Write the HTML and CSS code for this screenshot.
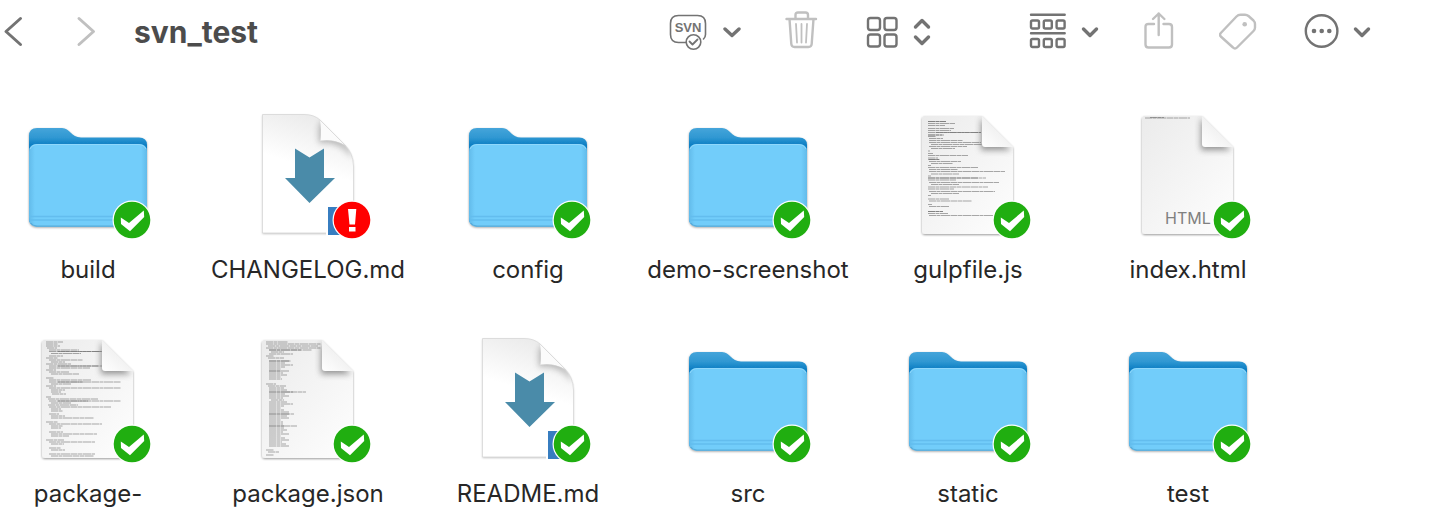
FILE: index.html
```
<!DOCTYPE html>
<html lang="en">
<head>
    <meta charset="utf-8">
    <meta name="viewport" content="width=device-width, initial-scale=1">
    <title>svn_test</title>
    <link rel="stylesheet" href="styles.css">
</head>
<body>
    <!-- shared icons -->
    <svg class="defs" width="0" height="0" aria-hidden="true">
        <defs>
            <linearGradient id="folderBack" x1="0" y1="0" x2="0" y2="1">
                <stop offset="0" stop-color="#45a5da"/>
                <stop offset="0.1" stop-color="#2f97d2"/>
                <stop offset="0.17" stop-color="#0f7fc4"/>
                <stop offset="1" stop-color="#0f7fc4"/>
            </linearGradient>
            <linearGradient id="folderSide" x1="0" y1="0" x2="1" y2="0">
                <stop offset="0" stop-color="#62bbea"/>
                <stop offset="0.05" stop-color="#72cdfa"/>
                <stop offset="0.95" stop-color="#72cdfa"/>
                <stop offset="1" stop-color="#62bbea"/>
            </linearGradient>
            <linearGradient id="paper" x1="0" y1="0" x2="1" y2="1">
                <stop offset="0" stop-color="#ebebeb"/>
                <stop offset="1" stop-color="#fefefe"/>
            </linearGradient>
            <linearGradient id="flap" x1="0" y1="1" x2="0.6" y2="0.3">
                <stop offset="0" stop-color="#ffffff"/>
                <stop offset="1" stop-color="#eeeeee"/>
            </linearGradient>
            <linearGradient id="mdPaper" x1="0.4" y1="0" x2="0.3" y2="0.4">
                <stop offset="0" stop-color="#ececec"/>
                <stop offset="1" stop-color="#ffffff"/>
            </linearGradient>
            <filter id="shadow" x="-10%" y="-10%" width="120%" height="120%">
                <feDropShadow dx="0" dy="1" stdDeviation="1" flood-color="#000" flood-opacity="0.4"/>
            </filter>
            <filter id="soft" x="-50%" y="-50%" width="200%" height="200%">
                <feGaussianBlur stdDeviation="3"/>
            </filter>
            <clipPath id="mdClip">
                <path d="M18.500 2.500H60Q70 2.500 76 8L101 33Q109 41 109.500 54V121H18.500Z"/>
            </clipPath>
            <clipPath id="docClip">
                <path d="M21 4H78L109 35V119Q109 122 106 122H21Q18 122 18 119V7Q18 4 21 4Z"/>
            </clipPath>
        </defs>

        <symbol id="folder" viewBox="0 0 128 128">
            <g filter="url(#shadow)">
                <path d="M5 24Q5 16 13 16H38C46 16 47 25.500 57 25.500H115Q123 25.500 123 33V106Q123 114.500 115 114.500H13Q5 114.500 5 106Z" fill="url(#folderBack)"/>
            </g>
            <path d="M5 40Q5 32 13 32H115Q123 32 123 40V106Q123 114.500 115 114.500H13Q5 114.500 5 106Z" fill="url(#folderSide)"/>
            <path d="M6 37Q8 32.500 14 32.500H114Q120 32.500 122 37" fill="none" stroke="#8fd8fc"/>
            <path d="M5.500 104.500H122.500M5.500 108H122.500" stroke="#63bdee" stroke-width="1.300"/>
            <path d="M7 111Q9 114 13 114H115Q119 114 121 111" fill="none" stroke="#58acd9"/>
        </symbol>

        <symbol id="markdown" viewBox="0 0 128 128">
            <g filter="url(#shadow)" opacity="0.6">
                <path d="M18.500 2.500H60Q70 2.500 76 8L101 33Q109 41 109.500 54V121H18.500Z" fill="#fff"/>
            </g>
            <g clip-path="url(#mdClip)">
                <path d="M18 2H111V122H18Z" fill="url(#mdPaper)"/>
                <path d="M75 14V31Q96 28 108 46L106 36L80 8Z" fill="#666" opacity="0.450" filter="url(#soft)"/>
            </g>
            <path d="M76 8Q77.500 16 76.500 29Q90 27 102 34Z" fill="#fbfbfb"/>
            <path d="M76.500 29Q90 27 102 34" fill="none" stroke="#cccccc" stroke-width="0.700"/>
            <path d="M18.500 121V2.500H60Q70 2.500 76 8L101 33Q109 41 109.500 54V121Z" fill="none" stroke="#d9d9d9" stroke-width="0.900"/>
            <path d="M51 36.500L65.500 45.500L80 36.500V66H91L65.500 91L41 66H51Z" fill="#4a8ba9"/>
            <path d="M82 93H96V124H82Z" fill="#fff"/>
            <path d="M84 95H96V123H84Z" fill="#377dc0"/>
        </symbol>

        <symbol id="document" viewBox="0 0 128 128">
            <g filter="url(#shadow)">
                <path d="M21 4H78L109 35V119Q109 122 106 122H21Q18 122 18 119V7Q18 4 21 4Z" fill="url(#paper)"/>
            </g>
        </symbol>

        <symbol id="fold" viewBox="0 0 128 128">
            <g clip-path="url(#docClip)">
                <path d="M77 6V38H107Z" fill="#666" opacity="0.700" filter="url(#soft)"/>
            </g>
            <path d="M78 4V32Q78 35 81 35H109Z" fill="url(#flap)"/>
        </symbol>

        <symbol id="ok" viewBox="0 0 128 128">
            <circle cx="108" cy="108" r="19.500" fill="#fff"/>
            <circle cx="108" cy="108" r="18.300" fill="#20ae10"/>
            <path d="M96.800 105.500L105 111L119.800 98.500L120.200 105L106 119.200L97 112Z" fill="#fff"/>
        </symbol>

        <symbol id="conflict" viewBox="0 0 128 128">
            <circle cx="108" cy="108" r="19.500" fill="#fff"/>
            <circle cx="108" cy="108" r="18.300" fill="#f00"/>
            <path d="M104 97H112.300L111 112.500H105.500ZM105 115H111.500V119.500H105Z" fill="#fff"/>
        </symbol>
    </svg>

    <header class="toolbar">
        <nav class="history">
            <button class="tool" aria-label="Back">
                <svg width="24" height="44"><path class="nav" d="M20.500 8.500L6 21.500L20.500 34.500"/></svg>
            </button>
            <button class="tool faded" aria-label="Forward">
                <svg width="24" height="44"><path class="nav" d="M7 8.500L21.500 21.500L7 34.500"/></svg>
            </button>
        </nav>
        <h1 class="title">svn_test</h1>

        <div class="tools">
            <button class="tool" aria-label="SVN">
                <svg width="72" height="44">
                    <path d="M17 32.500H9.500Q1.500 32.500 1.500 24.500V13.500Q1.500 5.500 9.500 5.500H28.500Q36.500 5.500 36.500 13.500V24.500Q36.500 27 34.500 29" stroke-width="1.600"/>
                    <text class="svn-text" x="19" y="22" text-anchor="middle">SVN</text>
                    <circle cx="24.500" cy="32" r="7.300" stroke-width="1.600"/>
                    <path d="M20.500 31.500L23.500 34.500L28.500 29.500" stroke-width="1.800"/>
                    <path class="chevron" d="M56 19L63 25.500L70 19"/>
                </svg>
            </button>
            <button class="tool faded" aria-label="Delete">
                <svg width="36" height="44">
                    <path d="M1.500 9H31M10.500 9V5Q10.500 2.500 13 2.500H20.500Q23 2.500 23 5V9M4.500 9L6.300 34Q6.600 37 9.500 37H23.500Q26.400 37 26.700 34L28.500 9"/>
                    <path d="M11 14L12 32.500M16.500 14V32.500M22 14L21 32.500" stroke-width="1.800"/>
                </svg>
            </button>
            <button class="tool" aria-label="Icon view">
                <svg width="68" height="44">
                    <rect x="3" y="8" width="12" height="12" rx="2.500"/>
                    <rect x="19.500" y="8" width="12" height="12" rx="2.500"/>
                    <rect x="3" y="24.500" width="12" height="12" rx="2.500"/>
                    <rect x="19.500" y="24.500" width="12" height="12" rx="2.500"/>
                    <path class="chevron" d="M50.500 17L57 10.500L63.500 17M50.500 27L57 33.500L63.500 27"/>
                </svg>
            </button>
            <button class="tool group" aria-label="Group by">
                <svg width="70" height="44">
                    <path d="M2 4.700H35.700M2 23.300H35.700"/>
                    <rect x="2" y="10.500" width="8" height="8" rx="1.500"/>
                    <rect x="14.800" y="10.500" width="8" height="8" rx="1.500"/>
                    <rect x="27.600" y="10.500" width="8" height="8" rx="1.500"/>
                    <rect x="2" y="29" width="8" height="8" rx="1.500"/>
                    <rect x="14.800" y="29" width="8" height="8" rx="1.500"/>
                    <rect x="27.600" y="29" width="8" height="8" rx="1.500"/>
                    <path class="chevron" d="M54.500 19L61 25.500L67.500 19"/>
                </svg>
            </button>
            <button class="tool faded" aria-label="Share">
                <svg width="32" height="44">
                    <path d="M11 14H5.500Q2.500 14 2.500 17V34.500Q2.500 37.500 5.500 37.500H26Q29 37.500 29 34.500V17Q29 14 26 14H20.500M15.700 25V3.500M10 9L15.700 3.500L21.400 9"/>
                </svg>
            </button>
            <button class="tool faded" aria-label="Tags">
                <svg width="40" height="44">
                    <path d="M1.800 23L17.500 6.500Q19.200 4.700 21.500 4.700H26Q28 4.700 29.500 6L34.500 10.500Q36 12 36 14V17.500Q36 19.500 34.500 21L18 37.500Q16 39.500 14 37.500L1.800 26.500Q0.200 24.800 1.800 23Z"/>
                    <circle class="dot" cx="25.700" cy="14.300" r="2.300"/>
                </svg>
            </button>
            <button class="tool" aria-label="More">
                <svg width="68" height="44">
                    <circle cx="18.600" cy="21" r="15.800"/>
                    <circle class="dot" cx="11" cy="21" r="2.300"/>
                    <circle class="dot" cx="18.700" cy="21" r="2.300"/>
                    <circle class="dot" cx="26.300" cy="21" r="2.300"/>
                    <path class="chevron" d="M52.500 19L59 25.500L65.500 19"/>
                </svg>
            </button>
        </div>
    </header>

    <main class="files">
        <a class="file" href="#build">
            <svg class="icon" viewBox="0 0 128 128"><use href="#folder"/><use href="#ok"/></svg>
            <span class="name">build</span>
        </a>
        <a class="file" href="#changelog">
            <svg class="icon" viewBox="0 0 128 128"><use href="#markdown"/><use href="#conflict"/></svg>
            <span class="name">CHANGELOG.md</span>
        </a>
        <a class="file" href="#config">
            <svg class="icon" viewBox="0 0 128 128"><use href="#folder"/><use href="#ok"/></svg>
            <span class="name">config</span>
        </a>
        <a class="file" href="#demo-screenshot">
            <svg class="icon" viewBox="0 0 128 128"><use href="#folder"/><use href="#ok"/></svg>
            <span class="name">demo-screenshot</span>
        </a>
        <a class="file" href="#gulpfile">
            <svg class="icon" viewBox="0 0 128 128">
                <use href="#document"/>
                <path class="code" d="M24 9.500h18M24 11.500h27M24 13.500h17M24 16.500h26M24 18.500h23M24 20.500h53M24 23h16M24 24.500h8M25 26.500h14M25 28.500h34M25 30.500h52M27 32.500h54M25 34.500h38M27 36.500h24M24 39h2M24 41.500h5M24 43.500h40M24 46h10M24 47.500h12M25 49.500h32M27 51.500h22M24 53.500h3M24 55.500h50M25 57.500h29M25 59.500h76M27 62h28M24 64h3M24 66h58M24 68h28M25 70.500h70M27 72.500h28M24 75h60M24 77h26M25 79.500h66M27 81.500h28M24 83.500h3M24 87h21M25 89h43M24 92.500h4M25 94.500h20M24 99.500h15M24 101.500h20M25 103.500h70"/>
                <path class="code" d="M24 9.500h18M32 20.500h45M24 23h14M25 47.500h10M24 66h50M24 99.500h15"/>
                <use href="#fold"/><use href="#ok"/>
            </svg>
            <span class="name">gulpfile.js</span>
        </a>
        <a class="file" href="#index">
            <svg class="icon" viewBox="0 0 128 128">
                <use href="#document"/>
                <path class="code" d="M21 6h45M26 5.500h14"/>
                <text class="kind" x="41" y="112">HTML</text>
                <use href="#fold"/><use href="#ok"/>
            </svg>
            <span class="name">index.html</span>
        </a>
        <a class="file" href="#package-lock">
            <svg class="icon" viewBox="0 0 128 128">
                <use href="#document"/>
                <path class="code" d="M22 6h17M22 8h12M22 10h14M23 12h10M25 14h30M25 15.500h53M27 17.500h30M25 20h14M22 22h12M25 24h34M27 26h14M22 28h25M25 30h53M25 32h41M22 34h10M25 36h20M27 38h28M22 42h8M25 44h42M25 46h72M27 48h20M22 50h10M25 52h72M27 54h14M27 56h10M28 58h14M22 61h5M24 63h50M25 65h72M27 67h20M24 69h30M25 71h62M27 73h10M27 75h12M25 78h10M27 80h14M27 82h43M22 86h12M25 88h53M27 90h12M27 92h10M25 96h14M27 98h46M27 100h18M22 104h18M25 106h46M27 108h13M25 112h12M27 114h14M25 118h46M27 120h43"/>
                <path class="code" d="M34 15.500h43M34 30h40M34 46h25M34 65h30"/>
                <use href="#fold"/><use href="#ok"/>
            </svg>
            <span class="name">package-</span>
        </a>
        <a class="file" href="#package">
            <svg class="icon" viewBox="0 0 128 128">
                <use href="#document"/>
                <path class="code" d="M22 6h22M22 8h55M24 10h50M22 12h55M25 14h43M27 16h13M25 18h24M22 20h8M24 22h16M25 25h22M25 27h16M25 29h24M25 31h16M25 33h12M25 35h20M25 37h14M25 39h18M25 41h12M25 43h13M22 48h10M24 50h18M25 52h15M25 54h18M25 56h37M25 58h16M25 60h20M25 62h14M27 64h13M25 66h18M25 68h24M25 70h15M25 72h12M25 74h15M25 76h20M25 78h25M25 80h18M25 82h20M25 84h12M25 86h14M25 88h14M25 90h28M25 92h15M25 94h18M25 96h14M25 98h20M25 100h12M25 102h16M25 104h20M25 106h13M25 108h17M25 110h20M22 114h8M24 116h11M22 119h8"/>
                <path class="code" d="M25 14h32M25 25h20M25 35h12M25 56h24M25 78h20M25 90h15"/>
                <use href="#fold"/><use href="#ok"/>
            </svg>
            <span class="name">package.json</span>
        </a>
        <a class="file" href="#readme">
            <svg class="icon" viewBox="0 0 128 128"><use href="#markdown"/><use href="#ok"/></svg>
            <span class="name">README.md</span>
        </a>
        <a class="file" href="#src">
            <svg class="icon" viewBox="0 0 128 128"><use href="#folder"/><use href="#ok"/></svg>
            <span class="name">src</span>
        </a>
        <a class="file" href="#static">
            <svg class="icon" viewBox="0 0 128 128"><use href="#folder"/><use href="#ok"/></svg>
            <span class="name">static</span>
        </a>
        <a class="file" href="#test">
            <svg class="icon" viewBox="0 0 128 128"><use href="#folder"/><use href="#ok"/></svg>
            <span class="name">test</span>
        </a>
    </main>
</body>
</html>
```
FILE: styles.css
```
body {
    margin: 0;
    background-color: #fff;
    color: #272727;
    font-family: Inter, "Liberation Sans", sans-serif;
}

svg {
    display: block;
}

.defs {
    position: absolute;
}

.toolbar {
    display: flex;
    align-items: center;
    height: 64px;
    padding-right: 67px;
}

.history {
    display: flex;
    gap: 48px;
}

.title {
    margin: 0 0 0 38px;
    color: #4c4c4c;
    font-size: 30px;
    font-weight: 700;
    line-height: 40px;
}

.tools {
    display: flex;
    gap: 44px;
    margin-left: auto;
}

.tool {
    padding: 0;
    border: none;
    background: none;
    color: #737373;
    cursor: pointer;
}

.tool.faded {
    color: #c0c0c0;
}

.tool.group {
    margin-left: 52px;
}

.tool svg {
    fill: none;
    stroke: currentColor;
    stroke-width: 2.4;
    stroke-linecap: round;
    stroke-linejoin: round;
}

.tool .nav {
    stroke-width: 3;
}

.tool .chevron {
    stroke-width: 3.4;
}

.tool .dot {
    fill: currentColor;
    stroke: none;
}

.svn-text {
    fill: currentColor;
    stroke: none;
    font-family: "Liberation Sans", sans-serif;
    font-size: 13px;
    font-weight: 700;
}

.files {
    display: grid;
    grid-template-columns: repeat(auto-fill, 176px);
    gap: 52px 44px;
    padding-top: 48px;
}

.file {
    display: flex;
    flex-direction: column;
    align-items: center;
    gap: 16px;
    color: inherit;
    text-decoration: none;
}

.icon {
    width: 128px;
    height: 128px;
}

.code {
    fill: none;
    stroke: #666;
    stroke-width: 0.8;
    stroke-dasharray: 7 0.5 4 0.5 9 0.5;
    opacity: 0.7;
}

.kind {
    fill: #808080;
    font-size: 16px;
}

.name {
    font-size: 24px;
    line-height: 28px;
    white-space: nowrap;
}
```
